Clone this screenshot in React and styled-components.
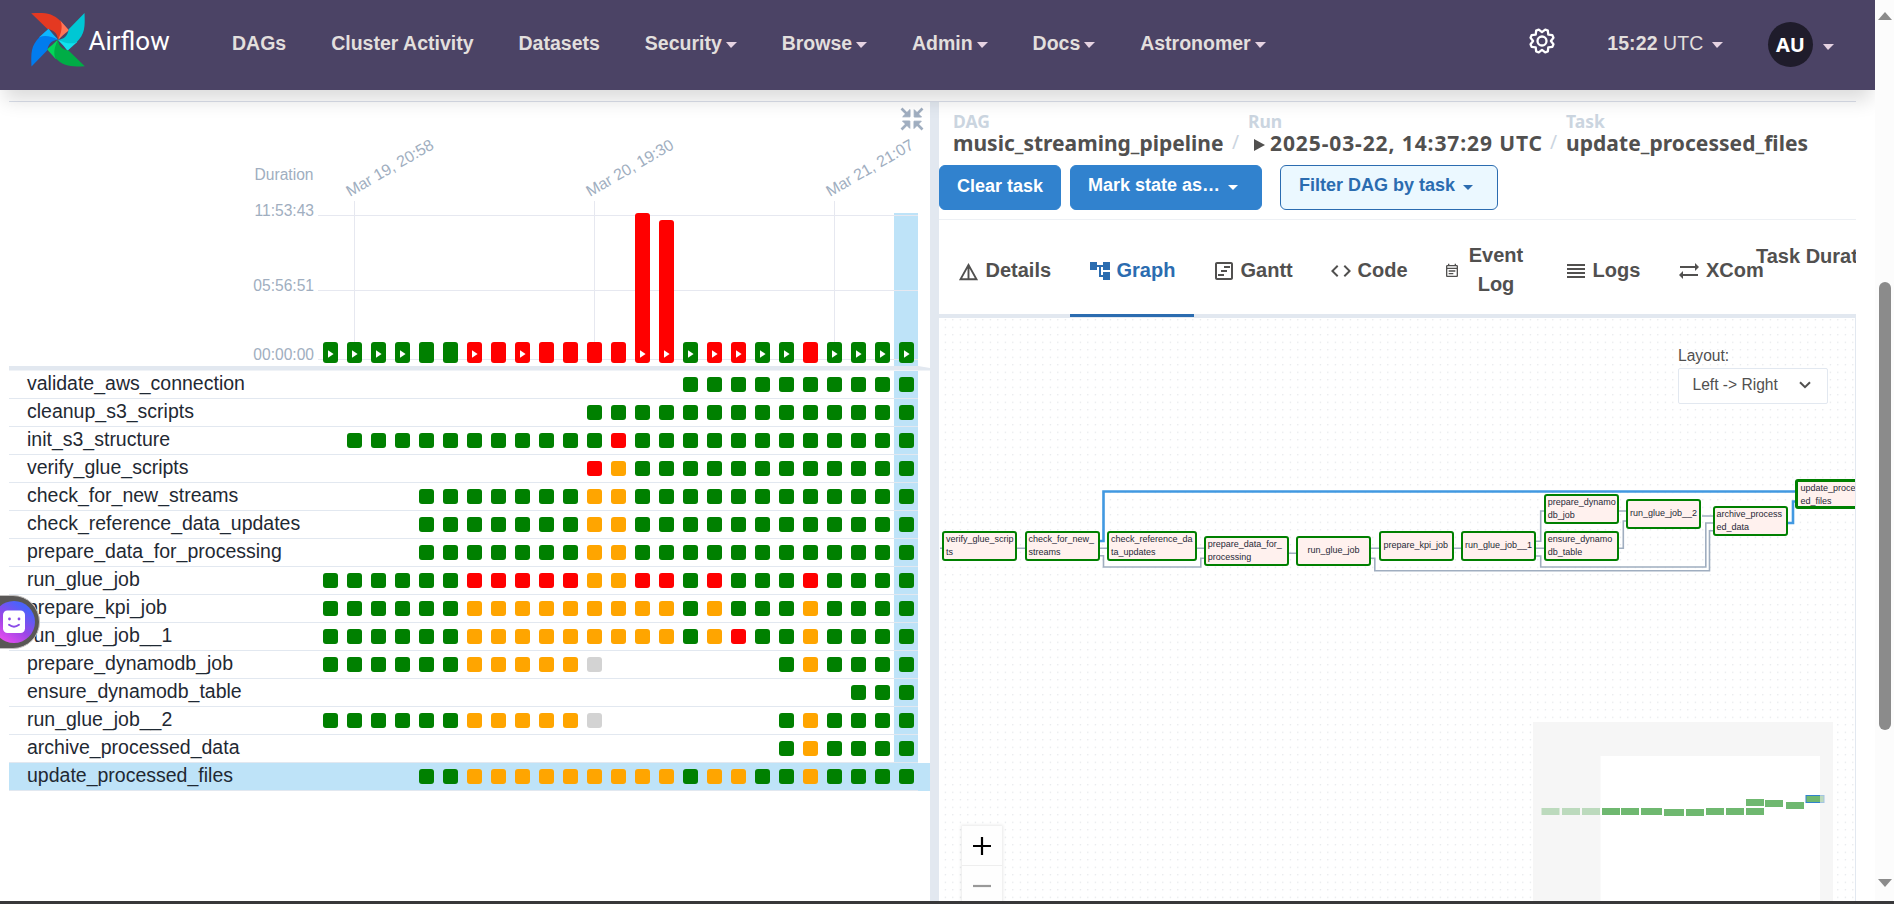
import React from "react";
import styled, { createGlobalStyle, css } from "styled-components";
import {
  MdOutlineDetails,
  MdAccountTree,
  MdOutlineViewTimeline,
  MdCode,
  MdOutlineEventNote,
  MdReorder,
  MdSyncAlt,
} from "react-icons/md";

const Global = createGlobalStyle`
  *, *::before, *::after { box-sizing: border-box; }
  body {
    margin: 0;
    overflow: hidden;
    background: #fff;
    font-family: "Liberation Sans", Arial, sans-serif;
    color: #51504f;
  }
`;

const STATE = { G: "#008000", R: "#ff0000", O: "#ffa500", N: "#d3d3d3" };

/* ---------- page frame ---------- */

const Window = styled.div`
  position: relative;
  display: flex;
  flex-direction: column;
  width: 1894px;
  height: 904px;
  overflow: hidden;
`;
const Viewport = styled.div`
  display: flex;
  height: 901px;
`;
const Page = styled.div`
  display: flex;
  flex-direction: column;
  width: 1875px;
  overflow: hidden;
`;
const BottomEdge = styled.div`
  height: 3px;
  background: #38383a;
`;
const ScrollTrack = styled.div`
  display: flex;
  flex-direction: column;
  align-items: center;
  width: 19px;
  padding: 12px 0 14px;
  background: #fcfcfc;
`;
const ScrollArrow = styled.div`
  width: 0;
  border: 7px solid transparent;
  border-top: ${(p) => (p.$down ? "8px solid #8b8b8b" : "none")};
  border-bottom: ${(p) => (p.$down ? "none" : "8px solid #8b8b8b")};
`;
const ScrollThumb = styled.div`
  width: 12px;
  height: 448px;
  margin: 262px 0 149px;
  border-radius: 6px;
  background: #8b8b8b;
`;

/* ---------- navigation ---------- */

const Navbar = styled.header`
  position: relative;
  z-index: 5;
  display: flex;
  flex: none;
  align-items: flex-start;
  height: 90px;
  background: #4b4365;
  box-shadow: 0 14px 18px -4px rgba(0, 0, 0, 0.14);
`;
const Brand = styled.div`
  display: flex;
  align-items: flex-start;
  width: 232px;
  padding: 12px 0 0 30px;
`;
const BrandName = styled.span`
  margin: 14px 0 0 2.5px;
  font: 400 26px/30px Roboto, sans-serif;
  color: #fff;
`;
const NavMenu = styled.nav`
  display: flex;
  gap: 45px;
`;
const NavItem = styled.a`
  display: flex;
  align-items: center;
  gap: 3.9px;
  height: 86px;
  font-size: 19.5px;
  font-weight: 700;
  color: #e2dfdd;
  white-space: nowrap;
`;
const Caret = styled.i`
  width: 0;
  margin-top: 4px;
  border-style: solid;
  border-color: ${(p) => p.$color || "#e6d3e2"} transparent transparent;
  border-width: ${(p) => (p.$small ? "5px 5px 0" : "6px 5.5px 0")};
  border-width: ${(p) => (p.$small ? "5px 5px 0" : "6px 6px 0 5px")};
`;
const NavRight = styled.div`
  display: flex;
  align-items: flex-start;
  margin-left: auto;
  padding-right: 41px;
`;
const GearSlot = styled.div`
  padding: 28px 52px 0 0;
`;
const Clock = styled(NavItem)`
  gap: 8.5px;
  margin-right: 45px;
`;
const ClockText = styled.span`
  letter-spacing: 0.1px;
`;
const Zone = styled.span`
  font-weight: 400;
`;
const UserMenu = styled.div`
  display: flex;
  align-items: center;
  gap: 10px;
  padding-top: 22px;
`;
const Avatar = styled.div`
  display: grid;
  place-items: center;
  width: 45px;
  height: 45px;
  border-radius: 50%;
  background: #1f1c2b;
  font: 700 20px "Noto Sans", "Open Sans", sans-serif;
  color: #fff;
`;

/* ---------- main split ---------- */

const Main = styled.main`
  display: flex;
  width: 1847px;
  height: 800px;
  margin: 11px 0 0 9px;
  border-top: 1px solid #dbe0ea;
`;
const GridPane = styled.section`
  width: 921px;
`;
const Divider = styled.div`
  width: 9px;
  background: #e2e8f0;
`;
const DetailPane = styled.section`
  display: flex;
  flex-direction: column;
  width: 917px;
  overflow: hidden;
`;

const ChartSvg = styled.svg`
  display: block;
  font-size: 15.6px;
  fill: #a0aec0;
`;
const TaskRow = styled.div`
  display: flex;
  align-items: center;
  width: ${(p) => (p.$selected ? 921 : 909)}px;
  height: 28px;
  background: ${(p) => (p.$selected ? "#bee3f8" : "transparent")};
`;
const TaskLine = styled.div`
  display: flex;
  width: 909px;
  height: 28px;
  border-bottom: 1px solid #e2e8f0;
`;
const TaskName = styled.span`
  width: 309px;
  padding-left: 18px;
  font-size: 19.5px;
  line-height: 25px;
  color: #1f2933;
  white-space: nowrap;
`;
const Cells = styled.div`
  display: grid;
  grid-template-columns: repeat(25, 24px);
`;
const Cell = styled.div`
  display: grid;
  place-items: center;
  background: ${(p) => (p.$active ? "#bee3f8" : "transparent")};
`;
const Instance = styled.i`
  width: 15px;
  height: 15px;
  border-radius: 3px;
  background: ${(p) => STATE[p.$state]};
`;

/* ---------- detail header ---------- */

const Crumbs = styled.div`
  display: flex;
  height: 63px;
  padding: 10px 0 0 14px;
  font-family: "Noto Sans", "Open Sans", sans-serif;
  font-weight: 700;
  white-space: nowrap;
`;
const Crumb = styled.div`
  display: flex;
  flex: none;
  flex-direction: column;
  width: ${(p) => p.$w}px;
`;
const CrumbLabel = styled.span`
  height: 18px;
  font-size: 17.5px;
  line-height: 18px;
  color: #cbd5e0;
`;
const CrumbValue = styled.span`
  display: flex;
  align-items: center;
  height: 26px;
  font-size: 21px;
  line-height: 26px;
  letter-spacing: ${(p) => p.$spacing || 0}px;
`;
const Slash = styled.span`
  flex: none;
  width: 25px;
  margin: 18px 0 0;
  padding-left: 9px;
  font: 400 19px/24px "Noto Sans", sans-serif;
  color: #cbd5e0;
`;
const PlayMark = styled.i`
  width: 0;
  margin: 3px 5px 0 6px;
  border: 6.5px solid transparent;
  border-left: 11px solid #51504f;
  border-right: 0;
`;
const Actions = styled.div`
  display: flex;
  height: 55px;
  border-bottom: 1px solid #edf0f4;
`;
const Button = styled.button`
  display: flex;
  align-items: center;
  gap: 8px;
  width: ${(p) => p.$w}px;
  height: 45px;
  margin: 0 ${(p) => p.$after || 0}px 0 0;
  padding: 0 0 ${(p) => (p.$menu ? 4 : 2)}px 17px;
  border: 1px solid #3182ce;
  border-radius: 6px;
  background: #3182ce;
  color: #fff;
  font: 700 18px "Liberation Sans", Arial, sans-serif;
  white-space: nowrap;
  ${(p) =>
    p.$outline &&
    css`
      padding-left: 18px;
      border-color: #2b6cb0;
      background: #ebf8ff;
      color: #2b6cb0;
    `}
`;
const Tabs = styled.div`
  display: flex;
  height: 98px;
  flex: none;
  border-bottom: 4px solid #e2e8f0;
`;
const Tab = styled.div`
  display: flex;
  flex: none;
  align-items: center;
  gap: ${(p) => p.$gap ?? 7}px;
  width: ${(p) => p.$w}px;
  height: 97px;
  padding: 6px 0 0 ${(p) => p.$pad ?? 20}px;
  border-bottom: 3px solid ${(p) => (p.$on ? "#2b6cb0" : "transparent")};
  color: ${(p) => (p.$on ? "#2b6cb0" : "#51504f")};
  font-size: 20px;
  font-weight: 700;
  line-height: 29px;
  white-space: nowrap;
  svg { flex: none; margin-top: 2px; }
`;
const TwoLine = styled.span`
  width: 56px;
  text-align: center;
  white-space: normal;
`;
const CutTab = styled(Tab)`
  align-items: flex-start;
  padding-top: 22px;
`;

/* ---------- graph ---------- */

const GraphCanvas = styled.div`
  position: relative;
  flex: 1;
  margin-left: 1px;
  border-right: 1px solid #e2e8f0;
  overflow: hidden;
`;
const Layer = styled.svg`
  position: absolute;
  inset: 0;
  width: 100%;
  height: 100%;
`;
const GraphNode = styled.div`
  position: absolute;
  left: ${(p) => p.$x}px;
  top: ${(p) => p.$y}px;
  display: flex;
  align-items: ${(p) => (p.$single ? "center" : "flex-start")};
  width: ${(p) => p.$w}px;
  height: 30px;
  padding: ${(p) => (p.$single ? "0 0 1px" : "0 0 0")}
    ${(p) => (p.$selected ? 2 : p.$pad ?? 1.5)}px;
  border: ${(p) => (p.$selected ? 3 : 2)}px solid #008000;
  border-radius: 3px;
  background: #fff1ee;
  color: #1f2937;
  font-size: 9px;
  line-height: 13px;
  white-space: pre;
  overflow: hidden;
`;
const LayoutPicker = styled.div`
  position: absolute;
  left: 738px;
  top: 27px;
  width: 150px;
  font-size: 15.6px;
  line-height: 22px;
`;
const Select = styled.div`
  display: flex;
  align-items: center;
  justify-content: space-between;
  height: 36px;
  margin-top: 1px;
  padding: 0 16px 2px 13.5px;
  border: 1px solid #e2e8f0;
  border-radius: 2px;
  background: #fff;
`;
const Zoom = styled.div`
  position: absolute;
  left: 22px;
  top: 508px;
  width: 40px;
  background: #fefefe;
  box-shadow: 0 0 3px 1px rgba(0, 0, 0, 0.09);
`;
const ZoomButton = styled.div`
  display: grid;
  place-items: center;
  height: 40px;
  border-bottom: 1px solid #eee;
`;
const MiniMap = styled.svg`
  position: absolute;
  left: 593px;
  top: 404px;
`;
const Helper = styled.div`
  position: absolute;
  z-index: 8;
  left: -30px;
  top: 594.5px;
  width: 70px;
  height: 54px;
  padding: 5px 5px 5px 18px;
  border: 1.5px solid #c2c0bf;
  border-radius: 27px;
  background: #595755;
`;
const HelperFace = styled.div`
  display: flex;
  align-items: center;
  justify-content: center;
  width: 42px;
  height: 42px;
  margin-left: 4px;
  border-radius: 50%;
  background: linear-gradient(35deg, #f04ff0 8%, #9b45e6 45%, #4c62fa 80%);
`;

const Pinwheel = () => (
  <svg width="56" height="56" viewBox="30 12 56 56">
    {[
      ["#e43921", "#ff7557"],
      ["#00c7d4", "#11e1ee"],
      ["#00ad46", "#04d659"],
      ["#017cee", "#0cb6ff"],
    ].map(([dark, light], i) => (
      <g key={dark} transform={`rotate(${i * 90} 58 39.7)`}>
        <path d="M60.3 20.5 69 30.2Q64 34 58.3 39.7Z" fill={light} />
        <path d="M31.2 13.2C45 12.6 52 12.6 60.8 21.3 62.6 27 61.5 33 58 39.7 57.4 33.5 54 30 47.5 29Z" fill={dark} />
      </g>
    ))}
  </svg>
);

const Gear = () => {
  const pts = [];
  for (let i = 0; i < 16; i++) {
    const r = i % 2 ? 8.9 : 11.9;
    const base = (i * Math.PI) / 8 + Math.PI / 8;
    const spread = i % 2 ? [0] : [-0.12, 0.12];
    spread.forEach((s) =>
      pts.push(`${(13 + r * Math.cos(base + s)).toFixed(2)},${(13 + r * Math.sin(base + s)).toFixed(2)}`)
    );
  }
  return (
    <svg width="26" height="26" viewBox="0 0 26 26" fill="none" stroke="#fff" strokeWidth="2.3" strokeLinejoin="round">
      <polygon points={pts.join(" ")} />
      <circle cx="13" cy="13" r="4.5" />
    </svg>
  );
};

/* ---------- duration chart ---------- */

const RUNS = "GGGGGGRRRRRRRRRGRRGGRGGGG";
const MANUAL = "1111001010000111111101111";
const TALL = { 13: 150, 14: 143 };

const DurationChart = () => (
  <ChartSvg width="921" height="269" viewBox="9 102 921 269">
    <rect x="894" y="213" width="24" height="153" fill="#bee3f8" />
    <g stroke="#e6e8f0">
      <path d="M318 215.5H918M318 290.5H918M318 359.5H918M354.5 201V359M594.5 201V359M834.5 201V359" />
    </g>
    <text x="313.5" y="180" textAnchor="end">Duration</text>
    <text x="314" y="216" textAnchor="end">11:53:43</text>
    <text x="314" y="291" textAnchor="end">05:56:51</text>
    <text x="314" y="360" textAnchor="end">00:00:00</text>
    {["Mar 19, 20:58", "Mar 20, 19:30", "Mar 21, 21:07"].map((label, i) => (
      <text key={label} fontSize="15.9" transform={`translate(${350 + i * 240} 197) rotate(-30)`}>{label}</text>
    ))}
    {[...RUNS].map((state, i) => {
      const h = TALL[i] || 21;
      const x = 323 + i * 24;
      return (
        <g key={i}>
          <rect x={x} y={363 - h} width="15" height={h} rx="3" fill={STATE[state]} />
          {MANUAL[i] === "1" && <path d={`M${x + 5} 350.3v7.4l5.6-3.7z`} fill="#fff" />}
        </g>
      );
    })}
    <path d="M9 366H918L930 368V370.5H9Z" fill="#e2e8f0" />
    <g stroke="#a0aec0" strokeWidth="2.6" fill="#a0aec0">
      {[0, 90, 180, 270].map((a) => (
        <g key={a} transform={`rotate(${a} 912 119)`}>
          <path d="M901.5 108.5 908 115" />
          <path d="M910 109.5v7.3H902.7z" strokeWidth="1" />
        </g>
      ))}
    </g>
  </ChartSvg>
);

const dots = (n) => ".".repeat(n);
const g = (n) => "G".repeat(n);
const o = (n) => "O".repeat(n);
const TASKS = [
  ["validate_aws_connection", dots(15) + g(10)],
  ["cleanup_s3_scripts", dots(11) + g(14)],
  ["init_s3_structure", "." + g(11) + "R" + g(12)],
  ["verify_glue_scripts", dots(11) + "RO" + g(12)],
  ["check_for_new_streams", dots(4) + g(7) + "OO" + g(12)],
  ["check_reference_data_updates", dots(4) + g(7) + "OO" + g(12)],
  ["prepare_data_for_processing", dots(4) + g(7) + "OO" + g(12)],
  ["run_glue_job", g(6) + "RRRRROORRGRGGGRGGGG"],
  ["prepare_kpi_job", g(6) + o(9) + "GOGGGOGGGG"],
  ["run_glue_job__1", g(6) + o(9) + "GORGGOGGGG"],
  ["prepare_dynamodb_job", g(6) + o(5) + "N" + dots(7) + "GOGGGG"],
  ["ensure_dynamodb_table", dots(22) + g(3)],
  ["run_glue_job__2", g(6) + o(5) + "N" + dots(7) + "GOGGGG"],
  ["archive_processed_data", dots(19) + "GOGGGG"],
  ["update_processed_files", dots(4) + "GG" + o(9) + "GOOGGOGGGG"],
];

/* ---------- graph data, in canvas coordinates ---------- */

const NODES = [
  { t: "verify_glue_scrip\nts", x: 2.4, y: 213.3, w: 75 },
  { t: "check_for_new_\nstreams", x: 85, y: 213.3, w: 75 },
  { t: "check_reference_da\nta_updates", x: 167.4, y: 213.3, w: 89.5 },
  { t: "prepare_data_for_\nprocessing", x: 264.3, y: 218.4, w: 84.5 },
  { t: "run_glue_job", x: 356, y: 218.4, w: 75, pad: 9.5 },
  { t: "prepare_kpi_job", x: 438.5, y: 213.3, w: 75, pad: 3 },
  { t: "run_glue_job__1", x: 521.4, y: 213.3, w: 75, pad: 1.5 },
  { t: "prepare_dynamo\ndb_job", x: 604.3, y: 175.6, w: 75 },
  { t: "ensure_dynamo\ndb_table", x: 604.3, y: 213.3, w: 75 },
  { t: "run_glue_job__2", x: 686.4, y: 181, w: 75, pad: 1.5 },
  { t: "archive_process\ned_data", x: 773, y: 188.4, w: 75 },
  { t: "update_process\ned_files", x: 855.4, y: 161.4, w: 75, selected: true },
];
const EDGES =
  "M0 230.3H3M77 230.3H85M160 230.3H168M257 230.3H265M348 235.3H356M431 230.3H439M513 230.3H522M596 230.3H605" +
  "M160 237.7H163.5V249H260.8V240.3H265M431 240.3H434.8V252.7H769.5V212.7H774" +
  "M596 223.3H600.7V193H605M596 238H600.7V249H765.8V205H774" +
  "M679 193H687M679 230.3H683.3V203H687M762 198H774";

const MINI = [
  [1541.5, 808], [1562, 808], [1582, 808], [1602, 808], [1621, 808], [1641, 808, 21],
  [1664, 809, 20], [1686, 809], [1706, 808], [1726, 808], [1746, 808], [1746, 799],
  [1765, 800], [1786, 802],
];

const NavDropdown = ({ children }) => (
  <NavItem>
    {children}
    <Caret />
  </NavItem>
);

export default function App() {
  return (
    <Window>
      <Global />
      <Viewport>
        <Page>
          <Navbar>
            <Brand>
              <Pinwheel />
              <BrandName>Airflow</BrandName>
            </Brand>
            <NavMenu>
              <NavItem>DAGs</NavItem>
              <NavItem>Cluster Activity</NavItem>
              <NavItem>Datasets</NavItem>
              <NavDropdown>Security</NavDropdown>
              <NavDropdown>Browse</NavDropdown>
              <NavDropdown>Admin</NavDropdown>
              <NavDropdown>Docs</NavDropdown>
              <NavDropdown>Astronomer</NavDropdown>
            </NavMenu>
            <NavRight>
              <GearSlot>
                <Gear />
              </GearSlot>
              <Clock>
                <ClockText>
                  15:22 <Zone>UTC</Zone>
                </ClockText>
                <Caret />
              </Clock>
              <UserMenu>
                <Avatar>AU</Avatar>
                <Caret />
              </UserMenu>
            </NavRight>
          </Navbar>

          <Main>
            <GridPane>
              <DurationChart />
              {TASKS.map(([name, states], row) => {
                const selected = row === TASKS.length - 1;
                return (
                  <TaskRow key={name} $selected={selected}>
                    <TaskLine>
                      <TaskName>{name}</TaskName>
                      <Cells>
                        {[...states].map((s, i) => (
                          <Cell key={i} $active={i === 24}>
                            {s !== "." && <Instance $state={s} />}
                          </Cell>
                        ))}
                      </Cells>
                    </TaskLine>
                  </TaskRow>
                );
              })}
            </GridPane>
            <Divider />
            <DetailPane>
              <Crumbs>
                <Crumb $w={270}>
                  <CrumbLabel>DAG</CrumbLabel>
                  <CrumbValue>music_streaming_pipeline</CrumbValue>
                </Crumb>
                <Slash>/</Slash>
                <Crumb $w={293}>
                  <CrumbLabel>Run</CrumbLabel>
                  <CrumbValue $spacing={0.9}>
                    <PlayMark />
                    2025-03-22, 14:37:29 UTC
                  </CrumbValue>
                </Crumb>
                <Slash>/</Slash>
                <Crumb $w={250}>
                  <CrumbLabel>Task</CrumbLabel>
                  <CrumbValue $spacing={0.05}>update_processed_files</CrumbValue>
                </Crumb>
              </Crumbs>
              <Actions>
                <Button $w={122} $after={9}>Clear task</Button>
                <Button $w={192} $after={18} $menu>
                  Mark state as…
                  <Caret $small $color="#fff" />
                </Button>
                <Button $w={218} $outline $menu>
                  Filter DAG by task
                  <Caret $small $color="#2b6cb0" />
                </Button>
              </Actions>
              <Tabs>
                <Tab $w={131} $pad={18} $gap={5.5}>
                  <MdOutlineDetails size={23} />
                  Details
                </Tab>
                <Tab $w={124} $pad={18} $gap={4.5} $on>
                  <MdAccountTree size={24} />
                  Graph
                </Tab>
                <Tab $w={117} $pad={18} $gap={4.5}>
                  <MdOutlineViewTimeline size={24} />
                  Gantt
                </Tab>
                <Tab $w={117} $pad={18} $gap={4.5}>
                  <MdCode size={24} />
                  Code
                </Tab>
                <Tab $w={117} $pad={16} $gap={8}>
                  <MdOutlineEventNote size={16} />
                  <TwoLine>Event Log</TwoLine>
                </Tab>
                <Tab $w={115} $pad={19} $gap={4.5}>
                  <MdReorder size={24} />
                  Logs
                </Tab>
                <Tab $w={96} $pad={17} $gap={5}>
                  <MdSyncAlt size={24} />
                  XCom
                </Tab>
                <CutTab $w={140} $pad={0}>Task Duration</CutTab>
              </Tabs>

              <GraphCanvas>
                <Layer>
                  <defs>
                    <pattern id="dots" x="4.8" y="1.2" width="7.5" height="7.5" patternUnits="userSpaceOnUse">
                      <circle cx="0.6" cy="0.6" r="0.55" fill="#d3d7dc" />
                    </pattern>
                  </defs>
                  <rect width="100%" height="100%" fill="url(#dots)" />
                  <path d={EDGES} fill="none" stroke="#a0aec0" strokeWidth="1.6" />
                  <path
                    d="M160 223H163.5V173.5H857M848 205H853V183.5H857"
                    fill="none"
                    stroke="#4299e1"
                    strokeWidth="2.6"
                  />
                </Layer>
                {NODES.map((n) => (
                  <GraphNode
                    key={n.t}
                    $x={n.x}
                    $y={n.y}
                    $w={n.w}
                    $pad={n.pad}
                    $single={!n.t.includes("\n")}
                    $selected={n.selected}
                  >
                    {n.t}
                  </GraphNode>
                ))}
                <LayoutPicker>
                  Layout:
                  <Select>
                    Left -&gt; Right
                    <svg width="12" height="8" viewBox="0 0 12 8" fill="none" stroke="#51504f" strokeWidth="2">
                      <path d="M1 1.2 6 6.2 11 1.2" />
                    </svg>
                  </Select>
                </LayoutPicker>
                <Zoom>
                  <ZoomButton>
                    <svg width="18" height="18" stroke="#000" strokeWidth="2.2">
                      <path d="M0 9H18M9 0V18" />
                    </svg>
                  </ZoomButton>
                  <ZoomButton>
                    <svg width="18" height="4" stroke="#999" strokeWidth="2.2">
                      <path d="M0 2H18" />
                    </svg>
                  </ZoomButton>
                </Zoom>
                <MiniMap width="300" height="180" viewBox="1533 722 300 180">
                  <rect x="1533" y="722" width="300" height="180" fill="#fff" />
                  {MINI.map(([x, y, w = 18], i) => (
                    <rect key={i} x={x} y={y} width={w} height="7" fill="#6fb870" />
                  ))}
                  <rect x="1806" y="795.5" width="18" height="7" fill="#6fb870" stroke="#3182ce" />
                  <path
                    d="M1533 722H1833V902H1533ZM1600.5 756V902H1820V756Z"
                    fillRule="evenodd"
                    fill="rgba(240,240,240,0.6)"
                  />
                </MiniMap>
              </GraphCanvas>
            </DetailPane>
          </Main>
        </Page>
        <ScrollTrack>
          <ScrollArrow />
          <ScrollThumb />
          <ScrollArrow $down />
        </ScrollTrack>
      </Viewport>
      <BottomEdge />
      <Helper>
        <HelperFace>
          <svg width="24" height="24" viewBox="0 0 24 24">
            <rect x="1" y="0.5" width="22" height="22.5" rx="4.5" fill="#fff" />
            <circle cx="7.5" cy="9" r="1.4" fill="#8a4be8" />
            <circle cx="17" cy="9" r="1.4" fill="#8a4be8" />
            <path d="M7 14.8Q12 18.6 17 14.8" fill="none" stroke="#8a4be8" strokeWidth="1.9" strokeLinecap="round" />
          </svg>
        </HelperFace>
      </Helper>
    </Window>
  );
}
